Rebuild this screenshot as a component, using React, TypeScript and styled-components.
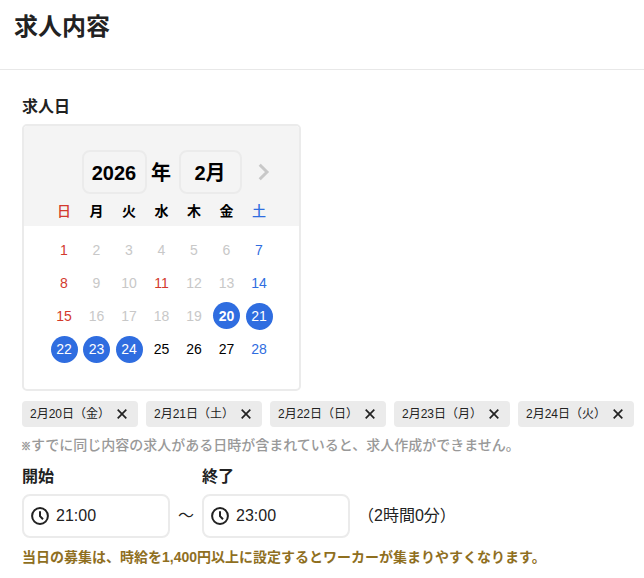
import { useState } from 'react';
import styled, { createGlobalStyle } from 'styled-components';

const GlobalStyle = createGlobalStyle`
  * {
    box-sizing: border-box;
  }
  body {
    margin: 0;
    background-color: #fff;
    color: #222;
    font-family: "Liberation Sans", "Noto Sans CJK JP", sans-serif;
    font-size: 16px;
  }
`;

const Page = styled.main`
  width: 644px;
  height: 578px;
  overflow: hidden;
`;

const Header = styled.header`
  height: 70px;
  padding: 9px 14px 0;
  border-bottom: 1px solid #e8e8e8;
`;

const Title = styled.h1`
  margin: 0;
  font-size: 24px;
  line-height: 36px;
  font-weight: 700;
`;

const Content = styled.section`
  padding: 25px 0 0 22px;
`;

const Label = styled.div`
  font-size: 16px;
  line-height: 24px;
  font-weight: 700;
`;

const Calendar = styled.div`
  width: 279px;
  height: 267px;
  margin-top: 5px;
  border: 2px solid #ebebeb;
  border-radius: 5px;
  overflow: hidden;
  color: #000;
`;

const CalendarHead = styled.div`
  height: 100px;
  padding-top: 24px;
  background-color: #f4f4f4;
`;

const MonthBar = styled.div`
  display: flex;
  align-items: center;
  padding-left: 58px;
  font-size: 20px;
  line-height: 24px;
  font-weight: 700;
`;

const SelectBox = styled.button<{ $width: number }>`
  width: ${({ $width }) => $width}px;
  height: 44px;
  padding: 1px 1px 0 0;
  border: 2px solid #ebebeb;
  border-radius: 8px;
  background-color: transparent;
  color: inherit;
  font: inherit;
`;

const YearText = styled.span`
  width: 32px;
  padding: 2px 0 0 4px;
`;

const NextButton = styled.button`
  display: flex;
  margin-left: 16px;
  padding: 0;
  border: none;
  background: none;
`;

const WeekGrid = styled.div`
  display: grid;
  grid-template-columns: repeat(7, 32.5px);
  justify-content: center;
  justify-items: center;
`;

const Weekdays = styled(WeekGrid)`
  margin-top: 7px;
  font-size: 14px;
  line-height: 20px;
  font-weight: 700;
`;

const Days = styled(WeekGrid)`
  grid-auto-rows: 33px;
  align-items: center;
  padding-top: 8px;
`;

type Tone = 'red' | 'blue' | 'black' | 'muted';

const colors: Record<Tone, string> = {
  red: '#d33a2c',
  blue: '#2f6de0',
  black: '#000',
  muted: '#c8c8c8',
};

const Weekday = styled.span<{ $tone: Tone }>`
  color: ${({ $tone }) => colors[$tone]};
  font-weight: ${({ $tone }) => ($tone === 'black' ? 700 : 500)};
`;

const Day = styled.button<{ $tone: Tone; $selected: boolean; $today: boolean }>`
  width: 27px;
  height: 27px;
  padding: ${({ $today }) => ($today ? 2 : 0)}px 0 0;
  border: none;
  border-radius: 50%;
  font-family: inherit;
  font-size: 14px;
  line-height: 19px;
  font-weight: ${({ $today }) => ($today ? 700 : 400)};
  margin-bottom: ${({ $today }) => ($today ? 2 : 0)}px;
  color: ${({ $tone, $selected }) => ($selected ? '#fff' : colors[$tone])};
  background-color: ${({ $selected }) => ($selected ? '#2f6de0' : 'transparent')};
`;

const Chips = styled.div`
  display: flex;
  gap: 8px;
  margin-top: 10px;
`;

const Chip = styled.div`
  display: flex;
  flex-shrink: 0;
  align-items: center;
  justify-content: space-between;
  width: 116px;
  height: 26px;
  padding: 0 11px 0 8px;
  border-radius: 4px;
  background-color: #ebebeb;
  font-size: 12px;
  line-height: 18px;
  white-space: nowrap;
`;

const RemoveButton = styled.button`
  display: flex;
  margin-left: -4px;
  padding: 0;
  border: none;
  background: none;
  color: #222;
`;

const Note = styled.p`
  height: 22px;
  margin: 7px 0 0;
  color: #999;
  font-size: 14px;
  font-weight: 500;
  line-height: 22px;
  white-space: nowrap;
`;

const NoteMark = styled.span`
  display: inline-block;
  width: 9px;
  font-size: 10px;
  font-weight: 700;
  text-indent: -1px;
  -webkit-text-stroke: 0.5px #999;
`;

const TimeRow = styled.div`
  display: flex;
  align-items: flex-end;
  margin-top: 9px;
`;

const TimeInput = styled.div`
  display: flex;
  align-items: center;
  width: 148px;
  height: 44px;
  margin-top: 5px;
  padding-left: 7px;
  gap: 7px;
  border: 2px solid #ebebeb;
  border-radius: 8px;
  line-height: 24px;
`;

const Separator = styled.span`
  width: 32px;
  line-height: 44px;
  text-align: center;
`;

const Duration = styled.span`
  margin-left: 8px;
  line-height: 42px;
  height: 44px;
  padding-top: 1px;
`;

const Hint = styled.p`
  margin: 8px 0 0;
  color: #8f6f1f;
  font-size: 14px;
  font-weight: 700;
  line-height: 22px;
  white-space: nowrap;
`;

const ClockIcon = () => (
  <svg width="18" height="18" viewBox="0 0 18 18" fill="none" stroke="#222" strokeWidth="2">
    <circle cx="9" cy="9" r="7.9" />
    <path d="M9 4.2v5l3 3" />
  </svg>
);

const CloseIcon = () => (
  <svg width="10" height="10" viewBox="0 0 10 10" stroke="currentColor" strokeWidth="1.7">
    <path d="M0.7 0.7l8.6 8.6M9.3 0.7L0.7 9.3" />
  </svg>
);

const ChevronIcon = () => (
  <svg width="12" height="18" viewBox="0 0 12 18" fill="none" stroke="#c8c8c8" strokeWidth="3">
    <path d="M1.7 1.7L9 9l-7.3 7.3" />
  </svg>
);

const weekdays = ['日', '月', '火', '水', '木', '金', '土'];
const today = 20;
const holidays = [11];

const weekdayTone = (index: number): Tone => {
  if (index === 0) return 'red';
  if (index === 6) return 'blue';
  return 'black';
};

const dayTone = (day: number): Tone => {
  const tone = weekdayTone((day - 1) % 7);
  if (holidays.includes(day)) return 'red';
  if (tone === 'black' && day < today) return 'muted';
  return tone;
};

const App = () => {
  const [selected, setSelected] = useState<number[]>([20, 21, 22, 23, 24]);

  const toggleDay = (day: number) => {
    if (day < today) return;
    setSelected((days) =>
      days.includes(day) ? days.filter((d) => d !== day) : [...days, day].sort((a, b) => a - b)
    );
  };

  return (
    <Page lang="ja">
      <GlobalStyle />
      <Header>
        <Title>求人内容</Title>
      </Header>
      <Content>
        <Label>求人日</Label>
        <Calendar>
          <CalendarHead>
            <MonthBar>
              <SelectBox $width={65}>2026</SelectBox>
              <YearText>年</YearText>
              <SelectBox $width={63}>2月</SelectBox>
              <NextButton aria-label="翌月">
                <ChevronIcon />
              </NextButton>
            </MonthBar>
            <Weekdays>
              {weekdays.map((name, i) => (
                <Weekday key={name} $tone={weekdayTone(i)}>{name}</Weekday>
              ))}
            </Weekdays>
          </CalendarHead>
          <Days>
            {Array.from({ length: 28 }, (_, i) => i + 1).map((day) => (
              <Day
                key={day}
                $tone={dayTone(day)}
                $selected={selected.includes(day)}
                $today={day === today}
                onClick={() => toggleDay(day)}
              >
                {day}
              </Day>
            ))}
          </Days>
        </Calendar>
        <Chips>
          {selected.map((day) => (
            <Chip key={day}>
              <span>2月{day}日（{weekdays[(day - 1) % 7]}）</span>
              <RemoveButton aria-label="削除" onClick={() => toggleDay(day)}>
                <CloseIcon />
              </RemoveButton>
            </Chip>
          ))}
        </Chips>
        <Note>
          <NoteMark>※</NoteMark>すでに同じ内容の求人がある日時が含まれていると、求人作成ができません。
        </Note>
        <TimeRow>
          <div>
            <Label>開始</Label>
            <TimeInput>
              <ClockIcon />
              21:00
            </TimeInput>
          </div>
          <Separator>〜</Separator>
          <div>
            <Label>終了</Label>
            <TimeInput>
              <ClockIcon />
              23:00
            </TimeInput>
          </div>
          <Duration>（2時間0分）</Duration>
        </TimeRow>
        <Hint>当日の募集は、時給を1,400円以上に設定するとワーカーが集まりやすくなります。</Hint>
      </Content>
    </Page>
  );
};

export default App;
